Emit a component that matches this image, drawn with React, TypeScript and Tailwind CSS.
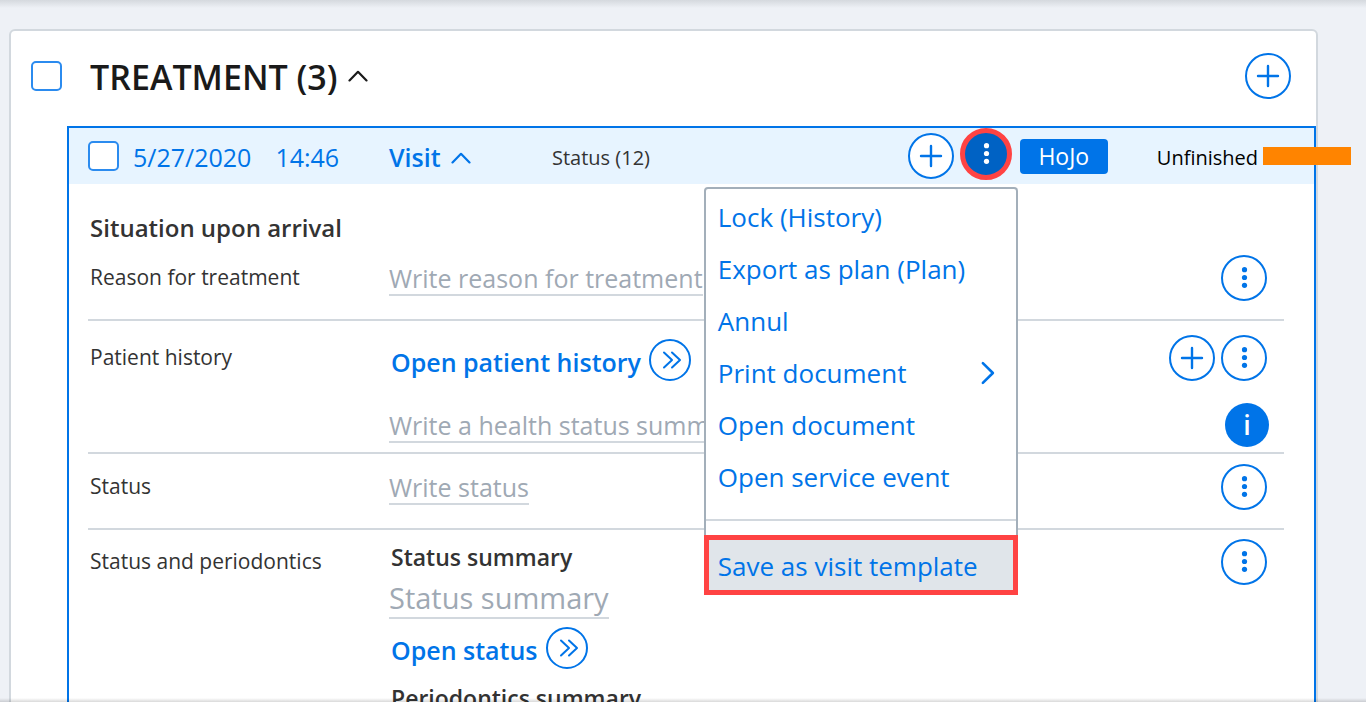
import { useState } from 'react'
import type { ReactNode } from 'react'

const menuItems = [
  { label: 'Lock (History)' },
  { label: 'Export as plan (Plan)' },
  { label: 'Annul' },
  { label: 'Print document', submenu: true },
  { label: 'Open document' },
  { label: 'Open service event' },
]

function Chevron({ className }: { className?: string }) {
  return (
    <svg viewBox="0 0 20 12" className={className} fill="none" stroke="currentColor" strokeWidth="2.2" strokeLinecap="round" strokeLinejoin="round">
      <path d="M1.5 10.4 10 1.8l8.5 8.6" />
    </svg>
  )
}

function Dots() {
  return (
    <svg viewBox="0 0 46 46" className="size-[46px] shrink-0" fill="currentColor">
      <circle cx="23.5" cy="14.7" r="2.6" />
      <circle cx="23.5" cy="22.5" r="2.6" />
      <circle cx="23.5" cy="30.3" r="2.6" />
    </svg>
  )
}

const circle =
  'flex size-[46px] shrink-0 items-center justify-center rounded-full border-2 border-[#0074e8] bg-white text-[#0074e8]'

const checkbox = 'h-[30px] w-[31px] shrink-0 appearance-none rounded-[5px] border-2 border-[#2b8bef] bg-white'

function AddButton({ label }: { label: string }) {
  return (
    <button aria-label={label} className={circle}>
      <svg viewBox="0 0 24 24" className="size-6" fill="none" stroke="currentColor" strokeWidth="2.4" strokeLinecap="round">
        <path d="M12 2v20M2 12h20" />
      </svg>
    </button>
  )
}

function MoreButton({ label }: { label: string }) {
  return (
    <button aria-label={label} className={circle}>
      <Dots />
    </button>
  )
}

function OpenLink({ children }: { children: string }) {
  return (
    <a href="#" className="flex items-center gap-2 pl-0.5 text-[25px] font-semibold text-[#0074e8]">
      <span className="pt-1.5">{children}</span>
      <span className="flex size-[42px] items-center justify-center rounded-full border-2 border-[#0074e8]">
        <svg viewBox="0 0 20 18" className="ml-1 h-[18px] w-5" fill="none" stroke="currentColor" strokeWidth="2" strokeLinecap="round" strokeLinejoin="round">
          <path d="m2 1.5 8 7.5-8 7.5M10 1.5l8 7.5-8 7.5" />
        </svg>
      </span>
    </a>
  )
}

function TextField({ label, placeholder, large }: { label: string; placeholder: string; large?: boolean }) {
  return (
    <input
      type="text"
      aria-label={label}
      placeholder={placeholder}
      className={`field-sizing-content border-b-2 border-[#d2d8de] bg-transparent outline-none placeholder:text-[#9fa9b4] ${
        large ? 'h-10 text-[29px]' : 'h-8 text-[25px]'
      }`}
    />
  )
}

function Row({ label, children, actions, className }: { label: string; children: ReactNode; actions: ReactNode; className: string }) {
  return (
    <div className={`flex items-start border-[#d2d8de] pr-[17px] ${className}`}>
      <div className="flex h-[46px] w-[301px] shrink-0 items-center pl-0.5">{label}</div>
      <div className="flex min-w-0 flex-1 flex-col items-start">{children}</div>
      {actions}
    </div>
  )
}

function VisitMenu() {
  return (
    <div role="menu" className="absolute top-full -right-1.5 z-10 mt-[7px] w-[314px] rounded border-2 border-[#a3afba] bg-white pt-0.5 text-[26px] text-[#0074e8]">
      {menuItems.map((item) => (
        <button key={item.label} role="menuitem" className="flex h-[52px] w-full items-center justify-between pr-4 pl-3">
          {item.label}
          {item.submenu && <Chevron className="h-3.5 w-6 rotate-90" />}
        </button>
      ))}
      <hr className="mt-4 mb-3.5 border-t-2 border-[#d2d8de]" />
      <div className="-mx-0.5 -mb-0.5 border-5 border-[#ff4343]">
        <button role="menuitem" className="flex h-[50px] w-full items-center bg-[#e0e5ea] pt-0.5 pl-[9px]">
          Save as visit template
        </button>
      </div>
    </div>
  )
}

export default function App() {
  const [menuOpen, setMenuOpen] = useState(true)

  return (
    <div className="relative h-screen overflow-hidden bg-[#eef1f6] pt-[29px] pr-12 pl-[9px] font-['Open_Sans','Noto_Sans',sans-serif] text-[21px] text-[#333]">
      <div className="absolute inset-x-0 top-0 h-2 bg-linear-to-b from-[#d5d9de] to-[#eef1f6]" />

      <main className="min-h-screen rounded-md border-2 border-[#d2d8de] bg-white">
        <header className="flex h-[95px] items-center pr-[25px] pb-1.5 pl-5">
          <input type="checkbox" aria-label="Select treatment" className={checkbox} />
          <h1 className="ml-7">
            <button className="flex items-center gap-2.5 text-[34px] font-semibold text-[#1a1a1a]">
              <span className="pt-1">TREATMENT (3)</span>
              <Chevron className="h-3 w-5" />
            </button>
          </h1>
          <div className="ml-auto">
            <AddButton label="Add treatment" />
          </div>
        </header>

        <section className="ml-14 min-h-screen border-2 border-[#0074e8]">
          <div className="flex h-14 items-center bg-[#e7f4ff] pl-[19px]">
            <div className="flex w-[301px] shrink-0 items-center text-[25px] text-[#0074e8]">
              <input type="checkbox" aria-label="Select visit" className={checkbox} />
              <span className="ml-3.5 pt-1">5/27/2020</span>
              <span className="ml-6 pt-1">14:46</span>
            </div>
            <button className="flex w-[163px] shrink-0 items-center gap-2.5 pt-1 text-[25px] font-semibold text-[#0074e8]">
              Visit
              <Chevron className="h-3 w-5" />
            </button>
            <span className="pt-1 text-xl">Status (12)</span>

            <div className="-mr-[37px] ml-auto flex items-center">
              <AddButton label="Add to visit" />
              <div className="relative mb-1 ml-1.5">
                <button
                  aria-label="Visit actions"
                  aria-expanded={menuOpen}
                  onClick={() => setMenuOpen(!menuOpen)}
                  className="flex size-[52px] items-center justify-center rounded-full border-5 border-[#ff4343] bg-[#0062c4] text-white"
                >
                  <Dots />
                </button>
                {menuOpen && <VisitMenu />}
              </div>
              <button className="ml-2 flex h-[35px] w-[88px] items-center justify-center rounded bg-[#0074e8] text-[23px] text-white">HoJo</button>
              <span className="ml-[49px] pt-1 text-xl text-black">Unfinished</span>
              <span className="ml-[5px] h-[18px] w-[88px] bg-[#ff8400]" />
            </div>
          </div>

          <div className="pr-[30px] pl-[19px]">
            <h2 className="flex h-[71px] items-center pt-4 pl-0.5 text-2xl font-semibold">Situation upon arrival</h2>
            <Row label="Reason for treatment" className="h-[66px] border-b-2" actions={<MoreButton label="Reason actions" />}>
              <div className="pt-[9px]">
                <TextField label="Reason for treatment" placeholder="Write reason for treatment" />
              </div>
            </Row>
            <Row
              label="Patient history"
              className="h-[133px] border-b-2 pt-3.5"
              actions={
                <div className="flex w-[98px] flex-wrap justify-end gap-x-1.5 gap-y-[22px]">
                  <AddButton label="Add patient history" />
                  <MoreButton label="Patient history actions" />
                  <button aria-label="Information" className="-mr-0.5 flex size-11 items-center justify-center rounded-full bg-[#0074e8] text-[27px] font-semibold text-white">
                    i
                  </button>
                </div>
              }
            >
              <div className="pt-[3px]">
                <OpenLink>Open patient history</OpenLink>
              </div>
              <div className="pt-[29px]">
                <TextField label="Health status summary" placeholder="Write a health status summary" />
              </div>
            </Row>
            <Row label="Status" className="h-[76px] border-b-2 pt-2.5" actions={<MoreButton label="Status actions" />}>
              <div className="pt-[9px]">
                <TextField label="Status" placeholder="Write status" />
              </div>
            </Row>
            <Row label="Status and periodontics" className="pt-[9px]" actions={<MoreButton label="Status and periodontics actions" />}>
              <h3 className="pl-0.5 text-[23px] leading-9 font-semibold">Status summary</h3>
              <div className="pt-1">
                <TextField label="Status summary" placeholder="Status summary" large />
              </div>
              <div className="pt-[7px]">
                <OpenLink>Open status</OpenLink>
              </div>
              <h3 className="pt-2.5 pl-0.5 text-[23px] leading-9 font-semibold">Periodontics summary</h3>
            </Row>
          </div>
        </section>
      </main>

      <div className="absolute inset-x-0 bottom-0 h-1 bg-linear-to-b from-transparent to-black/15" />
    </div>
  )
}
